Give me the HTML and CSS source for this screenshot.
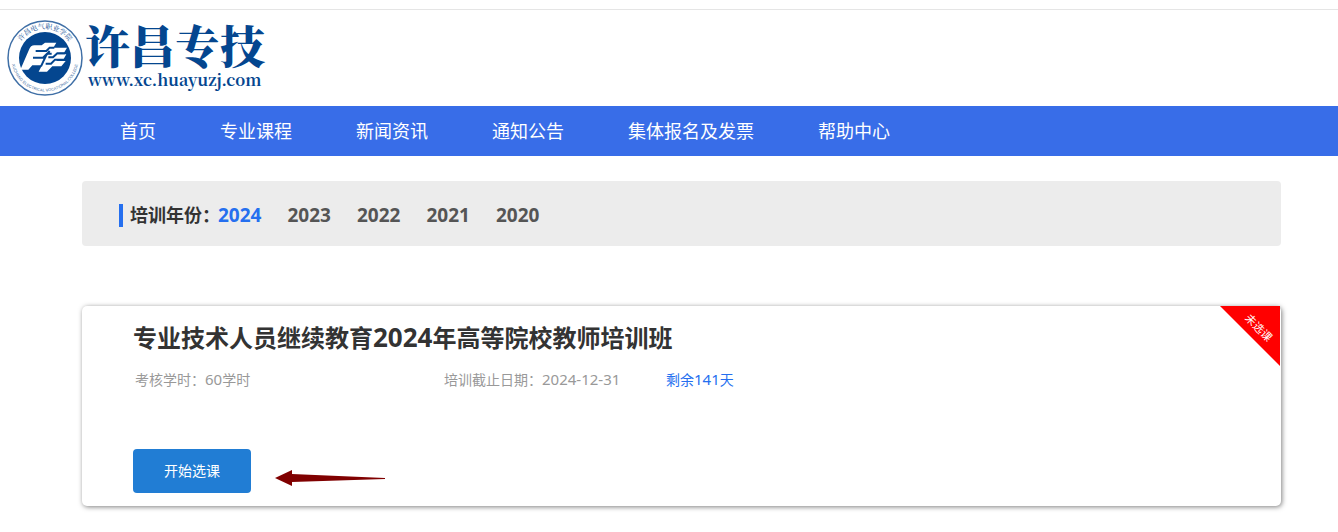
FILE: index.html
```html
<!DOCTYPE html>
<html lang="zh-CN">
<head>
  <meta charset="UTF-8">
  <meta name="viewport" content="width=device-width, initial-scale=1.0">
  <title>许昌专技</title>
  <link rel="stylesheet" href="styles.css">
</head>
<body>
  <!-- 顶部logo -->
  <header class="header">
    <a class="logo" href="#">
      <svg class="logo-mark" viewBox="0 0 76 76" aria-hidden="true">
        <defs>
          <path id="arc-top" d="M9 38a29 29 0 0 1 58 0"/>
          <path id="arc-bottom" d="M4.500 38a33.500 33.500 0 0 0 67 0"/>
        </defs>
        <circle cx="38" cy="38" r="37" fill="#fff" stroke="#3f6fa6" stroke-width="1.500"/>
        <circle cx="38" cy="38" r="26" fill="#04468f"/>
        <text class="seal-cn"><textPath href="#arc-top" startOffset="50%" text-anchor="middle">许昌电气职业学院</textPath></text>
        <text class="seal-en"><textPath href="#arc-bottom" startOffset="50%" text-anchor="middle">XUCHANG ELECTRICAL VOCATIONAL COLLEGE</textPath></text>
        <g transform="translate(10 9) scale(.3333)">
          <path fill="#fff" d="M10 122L36 62Q41 49 52 49H74L84 41H118L109 56H150L141 71H128L122 76H148L140 90H124L118 96H146L133 112H106L90 128H65L75 109H46L34 122z"/>
          <path fill="none" stroke="#04468f" stroke-width="6" d="M56 66H88L98 56H112M48 86H78L90 74H104M94 85H108L121 73H144M86 104H102L114 92H142M72 112L88 78L98 66"/>
        </g>
      </svg>
      <span class="logo-text">
        <span class="logo-name">许昌专技</span>
        <span class="logo-url">www.xc.huayuzj.com</span>
      </span>
    </a>
  </header>

  <!-- 导航 -->
  <nav class="nav">
    <a href="#">首页</a>
    <a href="#">专业课程</a>
    <a href="#">新闻资讯</a>
    <a href="#">通知公告</a>
    <a href="#">集体报名及发票</a>
    <a href="#">帮助中心</a>
  </nav>

  <main class="content">
    <!-- 年份筛选 -->
    <div class="years">
      <span class="years-label">培训年份：</span>
      <a class="active" href="#">2024</a>
      <a href="#">2023</a>
      <a href="#">2022</a>
      <a href="#">2021</a>
      <a href="#">2020</a>
    </div>

    <!-- 培训班 -->
    <section class="card">
      <div class="ribbon"><span>未选课</span></div>
      <h2>专业技术人员继续教育<span class="num">2024</span>年高等院校教师培训班</h2>
      <div class="info">
        <span class="hours">考核学时：<span class="num">60</span>学时</span>
        <span class="deadline">培训截止日期：<span class="num">2024-12-31</span></span>
        <span class="remain">剩余<span class="num">141</span>天</span>
      </div>
      <div class="actions">
        <button class="start" type="button">开始选课</button>
        <svg class="arrow" viewBox="0 0 110 16" aria-hidden="true">
          <path fill="#800000" d="M0 8L17 0v4l93 4v1l-93 3v4z"/>
        </svg>
      </div>
    </section>
  </main>
</body>
</html>
```

FILE: styles.css
```css
* {
  box-sizing: border-box;
}

body {
  margin: 0;
  background: #fff;
  color: #333;
  font-family: "Noto Sans", "Noto Sans CJK SC", sans-serif;
  font-size: 14px;
}

a {
  color: inherit;
  text-decoration: none;
}

/* 顶部 */
.header {
  margin-top: 9px;
  padding: 10px 7px;
  border-top: 1px solid #e5e5e5;
}

.logo {
  display: flex;
  align-items: flex-start;
  gap: 2px;
  height: 76px;
  color: #04468f;
}

.logo-mark {
  width: 76px;
  height: 76px;
}

.logo-text {
  display: flex;
  flex-direction: column;
}

.logo-name {
  font-family: "Noto Serif CJK SC", "Noto Sans CJK SC", serif;
  font-size: 45px;
  font-weight: 900;
  line-height: 50px;
}

.logo-url {
  padding-left: 3px;
  font-family: "Noto Serif CJK SC", "Liberation Serif", serif;
  font-size: 16px;
  font-weight: bold;
  line-height: 20px;
}

.seal-cn {
  fill: #04468f;
  font-family: "Noto Serif CJK SC", "Noto Sans CJK SC", serif;
  font-size: 7px;
}

.seal-en {
  fill: #3f6fa6;
  font-family: "Liberation Sans", sans-serif;
  font-size: 4px;
}

/* 导航 */
.nav {
  display: flex;
  gap: 64px;
  height: 50px;
  padding: 0 120px;
  background: #386de8;
  color: #fff;
  font-size: 18px;
  line-height: 48px;
}

.nav a {
  font-family: "Noto Sans CJK SC", sans-serif;
}

.content {
  margin: 25px 57px 25px 82px;
}

/* 年份 */
.years {
  display: flex;
  align-items: center;
  gap: 26px;
  height: 65px;
  padding: 3px 37px 0;
  background: #ececec;
  border-radius: 4px;
  color: #555;
  font-size: 19px;
  font-weight: bold;
}

.years-label {
  margin-right: -28px;
  padding-left: 7px;
  border-left: 4px solid #256fef;
  color: #333;
  font-size: 18px;
  line-height: 23px;
}

.years .active {
  color: #256fef;
}

/* 卡片 */
.card {
  position: relative;
  margin-top: 60px;
  padding: 13px 51px;
  border-radius: 5px;
  box-shadow: 1px 1px 5px rgba(0, 0, 0, 0.5);
}

.card h2 {
  margin: 0;
  font-size: 24px;
  line-height: 36px;
}

.card h2 .num {
  font-size: 26px;
}

.info {
  display: flex;
  margin-top: 12px;
  padding-left: 2px;
  color: #999;
  line-height: 22px;
}

.info .num {
  font-size: 15px;
}

.hours {
  width: 309px;
}

.deadline {
  width: 222px;
}

.remain {
  color: #256fef;
}

.actions {
  display: flex;
  align-items: center;
  gap: 24px;
  margin-top: 58px;
}

.start {
  width: 118px;
  height: 44px;
  padding: 0 0 2px;
  border: none;
  border-radius: 4px;
  background: #217dd4;
  color: #fff;
  font-family: inherit;
  font-size: 14px;
  cursor: pointer;
}

.arrow {
  width: 110px;
  height: 16px;
  margin-top: 14px;
}

/* 右上角标 */
.ribbon {
  position: absolute;
  top: 0;
  right: 1px;
  display: flex;
  align-items: center;
  justify-content: center;
  width: 60px;
  height: 60px;
  padding: 0 0 18px 18px;
  background: #f00;
  clip-path: polygon(0 0, 100% 0, 100% 100%);
  color: #fff;
  font-size: 11px;
}

.ribbon span {
  flex-shrink: 0;
  transform: rotate(45deg);
}
```
